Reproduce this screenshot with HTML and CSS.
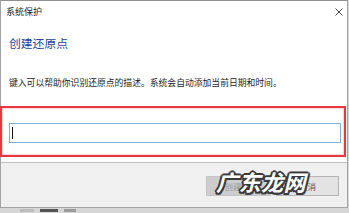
FILE: index.html
```html
<!DOCTYPE html>
<html lang="zh-CN">
<head>
<meta charset="utf-8">
<title>系统保护</title>
<link rel="stylesheet" href="styles.css">
</head>
<body>
<div class="window">
  <div class="titlebar">
    <span class="title">系统保护</span>
    <svg class="close" width="8" height="8" viewBox="0 0 8 8"><path d="M0.5 0.5 L7.5 7.5 M7.5 0.5 L0.5 7.5" stroke="#333" stroke-width="0.9" fill="none"/></svg>
  </div>
  <div class="content">
    <div class="heading">创建还原点</div>
    <div class="desc">键入可以帮助你识别还原点的描述。系统会自动添加当前日期和时间。</div>
    <div class="input"><span class="caret"></span></div>
  </div>
  <div class="footer">
    <div class="btn btn-disabled">创建(C)</div>
    <div class="btn">取消</div>
  </div>
  <div class="annot"></div>
  <div class="watermark">广东龙网</div>
</div>
<div class="taskbar">
  <span class="tb-bit tb-a"></span><span class="tb-bit tb-b"></span><span class="tb-bit tb-c"></span>
</div>
</body>
</html>
```
FILE: styles.css
```css
html, body {
  margin: 0;
  padding: 0;
}
body {
  width: 349px;
  height: 213px;
  overflow: hidden;
  background: #d6d6d6;
  font-family: "Noto Sans CJK SC", "Noto Sans", sans-serif;
  color: #222;
}
.window {
  position: relative;
  width: 348px;
  height: 208px;
  box-sizing: border-box;
  border: 1px solid #a3a3a3;
  border-top-color: #8f8f8f;
  background: #fff;
  display: flex;
  flex-direction: column;
}
.titlebar {
  height: 24px;
  flex: none;
  display: flex;
  align-items: center;
  justify-content: space-between;
  padding: 0 4px 2px 5px;
  box-sizing: border-box;
}
.title {
  font-size: 9px;
  line-height: 12px;
  color: #222;
}
.close {
  display: block;
}
.content {
  flex: none;
  height: 138px;
  box-sizing: border-box;
  padding: 10px 0 0 8px;
  border-bottom: 1px solid #bdbdbd;
}
.heading {
  font-size: 11.8px;
  line-height: 16px;
  color: #23439a;
}
.desc {
  margin-top: 26px;
  font-size: 8.8px;
  line-height: 12px;
  color: #222;
  white-space: nowrap;
}
.input {
  margin-top: 34px;
  width: 332px;
  height: 20px;
  box-sizing: border-box;
  border: 1px solid #7fb0dc;
  background: #fff;
  display: flex;
  align-items: center;
  padding-left: 2px;
}
.caret {
  display: block;
  width: 1px;
  height: 12px;
  background: #111;
}
.footer {
  flex: 1;
  background: #f0f0f0;
  display: flex;
  justify-content: flex-end;
  align-items: flex-start;
  gap: 5px;
  padding: 13px 8px 0 0;
}
.btn {
  width: 63px;
  height: 20px;
  box-sizing: border-box;
  border: 1px solid #b5b5b5;
  background: #e3e3e3;
  font-size: 8.5px;
  line-height: 18px;
  text-align: center;
  color: #555;
}
.btn-disabled {
  width: 65px;
  background: #cdcdcd;
  border-color: #c4c4c4;
  color: #9a9a9a;
}
.annot {
  position: absolute;
  left: -1px;
  top: 105px;
  width: 346px;
  height: 51px;
  box-sizing: border-box;
  border: 2px solid #e6393f;
  box-shadow: inset 0 0 1px 1px rgba(240, 140, 140, 0.35);
}
.watermark {
  position: absolute;
  left: 215px;
  top: 167px;
  font-size: 22px;
  line-height: 26px;
  font-weight: 700;
  font-style: italic;
  letter-spacing: 0.5px;
  color: #fff;
  text-shadow:
    -1.5px -1.5px 0 #3a3a3a, 1.5px -1.5px 0 #3a3a3a,
    -1.5px 1.5px 0 #3a3a3a, 1.5px 1.5px 0 #3a3a3a,
    0 -2px 0 #3a3a3a, 0 2px 0 #3a3a3a,
    -2px 0 0 #3a3a3a, 2px 0 0 #3a3a3a;
}
.taskbar {
  height: 5px;
  display: flex;
  align-items: center;
  padding-left: 20px;
  gap: 6px;
}
.tb-bit {
  display: block;
  height: 3px;
  background: #8a8a8a;
}
.tb-a { width: 14px; background: #bdbdbd; }
.tb-b { width: 18px; background: #555; }
.tb-c { width: 12px; background: #9a9a9a; }
```
